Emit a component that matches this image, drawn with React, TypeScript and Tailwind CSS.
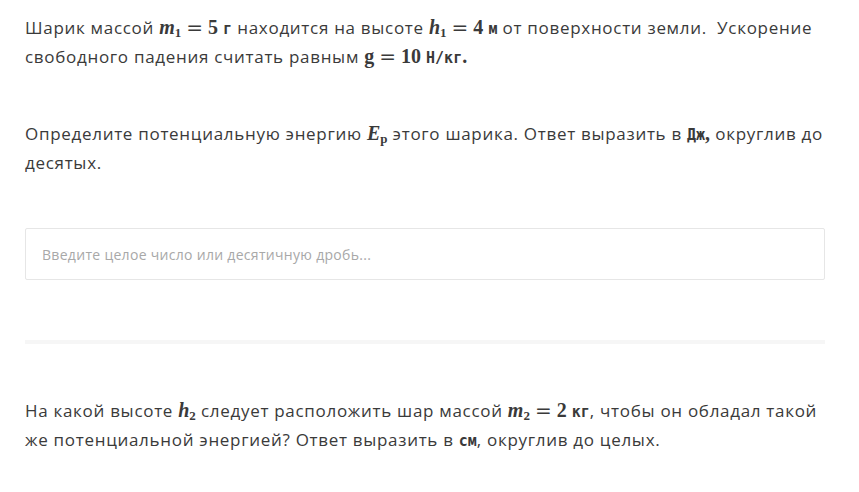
import React from "react";

const M = ({ children }: { children: React.ReactNode }) => (
  <span className="font-['Liberation_Serif',serif] font-bold italic text-[20px] leading-none tracking-normal">{children}</span>
);
const N = ({ children }: { children: React.ReactNode }) => (
  <span className="font-['Liberation_Serif',serif] font-bold text-[20px] leading-none tracking-normal">{children}</span>
);
const Eq = () => (
  <span className="font-['DejaVu_Sans',sans-serif] text-[20px] leading-none tracking-normal mx-[5px]">=</span>
);
const U = ({ children }: { children: React.ReactNode }) => (
  <span className="font-['DejaVu_Sans_Mono',monospace] font-bold text-[15px] leading-none tracking-normal">{children}</span>
);
const Sub = ({ children }: { children: React.ReactNode }) => (
  <span className="font-['Liberation_Serif',serif] font-bold not-italic text-[13px] tracking-normal leading-none relative top-[3px]">{children}</span>
);

export default function App() {
  return (
    <div className="w-[859px] h-[492px] bg-white font-['Open_Sans',sans-serif] text-[#3a3a3a] text-[17px] tracking-[0.7px] leading-[29px]">
      <div className="px-[25px] w-[849px] pt-[13px]">
        <p>
          Шарик массой <M>m</M><Sub>1</Sub><Eq /><N>5</N> <U>г</U> находится на высоте <M>h</M><Sub>1</Sub><Eq /><N>4</N> <U>м</U> от поверхности земли.&nbsp; Ускорение свободного падения считать равным <N>g</N><Eq /><N>10</N> <U>Н/кг</U><N>.</N>
        </p>
        <p className="mt-[48px]">
          Определите потенциальную энергию <M>E</M><Sub>p</Sub> этого шарика. Ответ выразить в <U>Дж</U><N>,</N> округлив до десятых.
        </p>
        <div className="mt-[51px] w-[800px] h-[52px] border border-[#e6e6e6] rounded-[2px] flex items-center px-[16px]">
          <span className="text-[14px] tracking-[0.3px] text-[#a8a8a8]">Введите целое число или десятичную дробь...</span>
        </div>
        <div className="mt-[60px] w-[800px] h-[4px] bg-[#f6f6f6]" />
        <p className="mt-[52px]">
          На какой высоте <M>h</M><Sub>2</Sub> следует расположить шар массой <M>m</M><Sub>2</Sub><Eq /><N>2</N> <U>кг</U>, чтобы он обладал такой же потенциальной энергией? Ответ выразить в <U>см</U>, округлив до целых.
        </p>
      </div>
    </div>
  );
}
